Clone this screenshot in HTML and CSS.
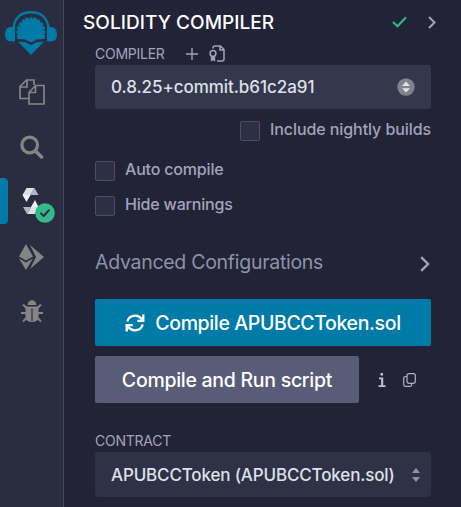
FILE: index.html
```html
<!DOCTYPE html>
<html lang="en">
<head>
<meta charset="utf-8">
<title>Solidity Compiler</title>
<link rel="stylesheet" href="styles.css">
</head>
<body>
<div class="app">
  <nav class="sidebar">
    <svg class="logo" viewBox="5 11 52 44" width="52" height="44">
      <path d="M13.500 30C13.500 19 20 12.300 31 12.300S48.500 19 48.500 30" fill="none" stroke="#007aa6" stroke-width="2.400"/>
      <path d="M15 27v14.500h-4.500C7 41.500 5 38.500 5 34.500S7 27 10.500 27zM47 27v14.500h4.500c3.500 0 5.500-3 5.500-7S55 27 51.500 27z" fill="#007aa6"/>
      <path d="M17.500 39Q16.500 35 16.500 31.500C16.500 23.500 22.500 17.200 31 17.200s14.500 6.300 14.500 14.300q0 3.500-1 7.500l-7.500.6-6 2.800-6-2.800z" fill="#007aa6"/>
      <path d="M28.800 16.500l.4 2.300M33.200 16.500l-.4 2.300M24 17.500l1.200 2.500M38 17.500L36.800 20M20 20.500l2 2M42 20.500l-2 2M17.300 24.700l2.400 1.200M44.700 24.700l-2.400 1.200M16 29.500l2.300.4M46 29.500l-2.300.4M16 34.500l2-.3M46 34.500l-2-.3" stroke="#2a2c3f" stroke-width="1.100"/>
      <path d="M18 41.700l7 .4 6 3 6-3 7-.4L31 55z" fill="#007aa6"/>
    </svg>
    <svg class="files" viewBox="0 0 26 26" width="26" height="26" fill="none" stroke="#858585" stroke-width="1.700">
      <path d="M9.500 19.500H1V7.500L7.500 1H15v5M8 1v7H1M10 13.500l6.500-7H25V25H10zM16.500 6.500v7H10"/>
    </svg>
    <svg class="search" viewBox="0 0 24 24" width="24" height="24" fill="none" stroke="#858585">
      <circle cx="9.700" cy="10" r="7.800" stroke-width="3.200"/><path d="M15.500 16l6 6" stroke-width="3.600" stroke-linecap="round"/>
    </svg>
    <div class="active">
      <span class="marker"></span>
      <svg class="solidity" viewBox="0 0 17 26" width="17" height="26">
        <path d="M4.500 0h8l-4 7H.5z" fill="#dedee3"/><path d="M12.500 0l4 7h-8z" fill="#b5b5bf"/><path d="M.5 7h8l-4 7z" fill="#f0f0f3"/>
        <path d="M13 12l3.500 7H9z" fill="#f0f0f3"/><path d="M9 19h7.500L13 26H5z" fill="#dedee3"/><path d="M1 19h8l-4 7z" fill="#b5b5bf"/>
      </svg>
      <svg class="badge" viewBox="0 0 20 20" width="20" height="20"><circle cx="10" cy="10" r="9.800" fill="#32ba89"/><path d="M6 10.400l2.700 2.600L14 7.200" fill="none" stroke="#2a2c3f" stroke-width="2" stroke-linecap="round" stroke-linejoin="round"/></svg>
    </div>
    <svg class="deploy" viewBox="0 0 25 26" width="25" height="26" fill="#858585">
      <path d="M7 0l7 12.500-7 4-7-4zM0 14.500l7 4 7-4L7 26zM11 1l14 12L11 25l6-12z"/>
    </svg>
    <svg class="bug" viewBox="0 0 22 23" width="22" height="23">
      <path d="M6.500 5a4.500 4.700 0 0 1 9 0z" fill="#858585"/><path d="M4.500 6.500h13v9.500q0 6-6.500 6t-6.500-6z" fill="#858585"/>
      <path d="M2 4.500l4 4M20 4.500l-4 4M0 13h5M17 13h5M2 21.500l4-4M20 21.500l-4-4" stroke="#858585" stroke-width="2"/><path d="M11 8.500v12.500" stroke="#2a2c3f" stroke-width="1.200"/>
    </svg>
  </nav>
  <main class="panel">
    <header class="head">
      <h1 class="title">SOLIDITY COMPILER</h1>
      <svg class="ok" viewBox="0 0 15 12" width="15" height="12" fill="none" stroke="#32ba89" stroke-width="2"><path d="M1 6l4.500 4.300L14 1.200"/></svg>
      <svg class="next" viewBox="0 0 8 13" width="8" height="13" fill="none" stroke="#a2a3bd" stroke-width="2"><path d="M1 1l5.500 5.500L1 12"/></svg>
    </header>
    <section class="body">
      <div class="label-row">
        <span class="label compiler">COMPILER</span>
        <svg class="plus" viewBox="0 0 12 12" width="12" height="12" stroke="#a2a3bd" stroke-width="1.400"><path d="M6 0v12M0 6h12"/></svg>
        <svg class="cert" viewBox="0 0 16 17" width="16" height="17" fill="none" stroke="#a2a3bd" stroke-width="1.500"><path d="M4 3.500V3q0-2 2-2h5.500L15 4.500V14q0 2-2 2H8M11 1v4h4"/><circle cx="4" cy="8.500" r="2.900"/><path d="M2.300 11v5L4 14.700 5.700 16v-5" fill="#a2a3bd" stroke-width="1"/></svg>
      </div>
      <div class="select version"><span class="value">0.8.25+commit.b61c2a91</span>
        <svg viewBox="0 0 18 18" width="18" height="18"><circle cx="9" cy="9" r="8.700" fill="#80828e"/><path d="M5 8l4-4.500L13 8zM5 10.200h8L9 14.500z" fill="#e3e4ea"/></svg>
      </div>
      <label class="check nightly"><span class="box"></span><span class="check-text">Include nightly builds</span></label>
      <label class="check auto"><span class="box"></span><span class="check-text">Auto compile</span></label>
      <label class="check hide"><span class="box"></span><span class="check-text">Hide warnings</span></label>
      <div class="advanced"><span class="advanced-text">Advanced Configurations</span>
        <svg class="chevron" viewBox="0 0 10 16" width="10" height="16" fill="none" stroke="#a2a3bd" stroke-width="2.400"><path d="M1.200 1.200L8 8l-6.800 6.800"/></svg>
      </div>
      <button class="btn primary">
        <svg viewBox="0 0 20 18" width="20" height="18" fill="none" stroke="#fff" stroke-width="2.300"><path d="M2.300 7.500C4 1 12.500-.5 17 5.200M18.300.5v6.300h-6M17.700 10.500C16 17 7.500 18.500 3 12.800M1.700 17.500v-6.300h6"/></svg>
        <span class="compile-text">Compile APUBCCToken.sol</span>
      </button>
      <div class="run-row">
        <button class="btn secondary"><span class="run-text">Compile and Run script</span></button>
        <svg class="info" viewBox="0 0 8 14" width="8" height="14"><path d="M2.500 0h2.500v2.500H2.500zM1 4.500h4.200V12.300H7.500V14H.5v-1.700h2.600V6.200H1z" fill="#c0c1d2"/></svg>
        <svg viewBox="0 0 13 14" width="13" height="14" fill="none" stroke="#b0b1c7" stroke-width="1.200"><rect x="4" y=".7" width="8.300" height="9.600" rx="2"/><path d="M4 3.500H2.500Q.7 3.500.7 5.300v6.200q0 1.800 1.800 1.800H7q1.800 0 1.800-1.800v-1"/></svg>
      </div>
      <div class="label contract-label"><span class="contract-text">CONTRACT</span></div>
      <div class="select contract"><span class="contract-value">APUBCCToken (APUBCCToken.sol)</span>
        <svg viewBox="0 0 8 14" width="8" height="14" fill="#8c92b0"><path d="M0 5l4-5 4 5zM0 9h8l-4 5z"/></svg>
      </div>
    </section>
  </main>
</div>
</body>
</html>
```
FILE: styles.css
```css
* { box-sizing: border-box; }
body { margin: 0; background: #222336; font-family: Inter, "Liberation Sans", sans-serif; color: #a2a3bd; overflow: hidden; }
svg { display: block; flex: none; }
.app { display: flex; height: 507px; }
.sidebar { flex: none; width: 64px; background: #2a2c3f; border-right: 1px solid #444760; display: flex; flex-direction: column; align-items: center; padding-top: 11px; }
.logo { margin-right: 1px; }
.files { margin-top: 24px; }
.search { margin: 30px 0 0; }
.active { position: relative; width: 100%; height: 46px; margin-top: 19px; }
.marker { display: block; width: 8px; height: 46px; background: #007aa6; border-radius: 0 4px 4px 0; }
.solidity { position: absolute; left: 22px; top: 10px; }
.badge { position: absolute; left: 35px; top: 25px; }
.deploy { margin-top: 20px; }
.bug { margin-top: 30px; }
.panel { flex: 1; min-width: 0; }
.head { height: 44px; display: flex; align-items: center; padding: 0 25px 0 19px; }
.title { margin: 0; font-size: 19px; font-weight: 500; letter-spacing: 0.05px; color: #fff; white-space: nowrap; }
.ok { margin-left: auto; margin-right: 21px; }
.body { padding: 0 30px 0 31px; }
.label-row { height: 20px; margin-bottom: 1px; display: flex; align-items: center; }
.label { font-size: 14px; letter-spacing: -0.25px; white-space: nowrap; }
.compiler { width: 91px; line-height: 18px; margin-top: -1px; }
.plus { margin-right: 11px; }
.cert { margin-top: -1px; }
.select { display: flex; align-items: center; justify-content: space-between; color: #dfe1ea; border-radius: 3px; padding: 0 16px; white-space: nowrap; }
.version { height: 44px; background: #35384c; font-size: 17px; font-weight: 500; }
.value { letter-spacing: -0.05px; }
.check { display: flex; height: 20px; font-size: 16px; white-space: nowrap; }
.box { width: 20px; height: 20px; border: 1px solid #4b4d64; border-radius: 2px; background: #2d2f45; margin-right: 10px; }
.check-text { line-height: 17px; font-weight: 500; letter-spacing: -0.18px; }
.nightly { margin-top: 12px; justify-content: flex-end; }
.nightly .check-text { letter-spacing: -0.08px; }
.auto { margin-top: 20px; }
.hide { margin-top: 15px; }
.advanced { display: flex; justify-content: space-between; align-items: center; height: 24px; margin-top: 34px; padding-right: 1px; font-size: 19.500px; letter-spacing: -0.28px; color: #8e92a9; white-space: nowrap; }
.chevron { margin-top: 3px; }
.btn { border: 0; border-radius: 2px; height: 47px; padding: 0; display: flex; align-items: center; justify-content: center; color: #fff; font: 500 19.500px Inter, "Liberation Sans", sans-serif; letter-spacing: -0.37px; white-space: nowrap; }
.primary { width: 100%; margin-top: 25px; background: #007aa6; gap: 10px; }
.run-row { margin-top: 10px; display: flex; align-items: center; }
.secondary { width: 264px; background: #595c76; letter-spacing: -0.28px; }
.info { margin: 0 17px 0 19px; }
.contract-label { height: 21px; line-height: 19px; margin-top: 28px; }
.contract { height: 45px; background: #2f3146; font-size: 17px; font-weight: 500; letter-spacing: -0.15px; padding-right: 11px; }
```
